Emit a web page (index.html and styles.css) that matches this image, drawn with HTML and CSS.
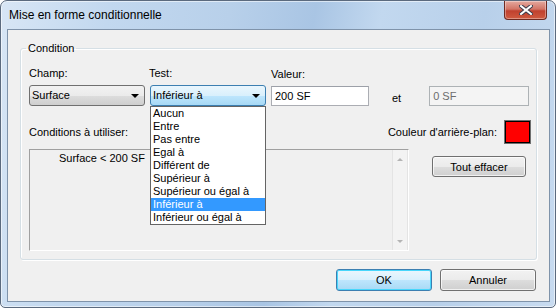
FILE: index.html
```html
<!DOCTYPE html>
<html lang="fr">
<head>
    <meta charset="UTF-8">
    <title>Mise en forme conditionnelle</title>
    <link rel="stylesheet" href="styles.css">
</head>
<body>
    <div class="window">
        <div class="titlebar">
            <span class="title">Mise en forme conditionnelle</span>
            <div class="close">
                <svg width="14" height="10" viewBox="0 0 14 10">
                    <path d="M2 1 L12 9 M12 1 L2 9" stroke="#3b3b4a" stroke-width="4" stroke-linecap="square"/>
                    <path d="M2 1 L12 9 M12 1 L2 9" stroke="#ffffff" stroke-width="2" stroke-linecap="square"/>
                </svg>
            </div>
        </div>
        <div class="client">
            <fieldset class="group">
                <legend>Condition</legend>
                <div class="fields">
                    <div class="field champ">
                        <label>Champ:</label>
                        <div class="combo">Surface<span class="arrow"></span></div>
                    </div>
                    <div class="field test">
                        <label>Test:</label>
                        <div class="combo focused">Inférieur à<span class="arrow"></span></div>
                        <ul class="droplist">
                            <li>Aucun</li>
                            <li>Entre</li>
                            <li>Pas entre</li>
                            <li>Egal à</li>
                            <li>Différent de</li>
                            <li>Supérieur à</li>
                            <li>Supérieur ou égal à</li>
                            <li class="selected">Inférieur à</li>
                            <li>Inférieur ou égal à</li>
                        </ul>
                    </div>
                    <div class="field valeur">
                        <label>Valeur:</label>
                        <div class="input">200 SF</div>
                    </div>
                    <span class="et">et</span>
                    <div class="input disabled">0 SF</div>
                </div>
                <div class="row-top">
                    <span>Conditions à utiliser:</span>
                    <div class="couleur">
                        <span>Couleur d'arrière-plan:</span>
                        <div class="swatch"></div>
                    </div>
                </div>
                <div class="row-main">
                    <div class="listbox">
                        <div class="list-items">
                            <div class="list-item">Surface &lt; 200 SF</div>
                        </div>
                        <div class="scrollbar">
                            <span class="sarrow up"></span>
                            <span class="sarrow down"></span>
                        </div>
                    </div>
                    <button class="btn clear">Tout effacer</button>
                </div>
            </fieldset>
            <div class="buttons">
                <button class="btn default">OK</button>
                <button class="btn">Annuler</button>
            </div>
        </div>
    </div>
</body>
</html>
```

FILE: styles.css
```css
body {
    margin: 0;
    font-family: 'Liberation Sans', Arial, sans-serif;
    font-size: 11px;
    color: #000;
    background: #fff;
}
.window {
    width: 556px;
    height: 308px;
    box-sizing: border-box;
    border: 1px solid #5b6a7e;
    border-radius: 7px 7px 5px 5px;
    padding: 0 5px 5px 6px;
    display: flex;
    flex-direction: column;
    background: linear-gradient(100deg, #d8e6f5 0%, #c2d8ef 18%, #b8d0ea 38%, #a9c5e4 52%, #c2d8ef 63%, #b8d0ea 80%, #c8dbf0 100%);
    box-shadow: inset 0 0 0 1px rgba(255, 255, 255, 0.55);
}
.titlebar {
    height: 28px;
    display: flex;
    justify-content: space-between;
    align-items: flex-start;
    padding-left: 2px;
}
.title {
    font-size: 12px;
    line-height: 15px;
    margin-top: 7px;
    color: #000;
}
.close {
    width: 43px;
    height: 19px;
    margin-right: 3px;
    box-sizing: border-box;
    border: 1px solid #6e2a22;
    border-top: none;
    border-radius: 0 0 4px 4px;
    background: linear-gradient(#e4a99f, #d27566 45%, #c0412f 55%, #cf5a40);
    box-shadow: inset 0 0 0 1px rgba(255, 255, 255, 0.35);
    display: flex;
    align-items: center;
    justify-content: center;
}
.client {
    flex: 1;
    border: 1px solid #7f93aa;
    background: #f0f0f0;
    display: flex;
    flex-direction: column;
}
.group {
    margin: 12px 12px 0 12px;
    padding: 12px 5px 8px 8px;
    border: 1px solid #d5dfe5;
    border-radius: 3px;
    box-shadow: inset 1px 1px 0 #fff, 1px 1px 0 #fff;
    min-width: 0;
}
.group legend {
    padding: 0 2px;
    margin-left: -3px;
    line-height: 13px;
}
.fields {
    display: flex;
    align-items: flex-end;
    gap: 5px;
}
.field {
    display: flex;
    flex-direction: column;
    gap: 5px;
    position: relative;
}
.field label {
    line-height: 13px;
}
.champ,
.test {
    width: 116px;
}
.test label {
    margin-left: -1px;
}
.valeur {
    width: 98px;
}
.combo {
    height: 21px;
    box-sizing: border-box;
    border: 1px solid #707070;
    border-radius: 3px;
    padding-left: 2px;
    line-height: 19px;
    display: flex;
    justify-content: space-between;
    align-items: center;
    background: linear-gradient(#f2f2f2, #ebebeb 50%, #dddddd 51%, #cfcfcf);
}
.combo.focused {
    border-color: #3c7fb1;
    background: linear-gradient(#eaf6fd, #d9f0fc 50%, #bee6fd 51%, #a7d9f5);
}
.arrow {
    width: 0;
    height: 0;
    margin-right: 5px;
    border-left: 4px solid transparent;
    border-right: 4px solid transparent;
    border-top: 4px solid #000;
}
.input {
    height: 20px;
    box-sizing: border-box;
    border: 1px solid #abadb3;
    border-top-color: #9ca0a8;
    background: #fff;
    padding-left: 3px;
    line-height: 18px;
}
.input.disabled {
    width: 100px;
    background: #f4f4f4;
    color: #6d6d6d;
    border-color: #adb2b5;
    margin-left: 23px;
}
.et {
    margin-left: 18px;
    line-height: 20px;
    position: relative;
    top: 2px;
}
.droplist {
    position: absolute;
    top: 39px;
    left: 0;
    width: 116px;
    box-sizing: border-box;
    margin: 0;
    padding: 0;
    list-style: none;
    background: #fff;
    border: 1px solid #646464;
    z-index: 2;
}
.droplist li {
    height: 13px;
    line-height: 13px;
    padding-left: 2px;
}
.droplist li.selected {
    background: #3399ff;
    color: #fff;
}
.row-top {
    margin-top: 14px;
    height: 24px;
    display: flex;
    justify-content: space-between;
    align-items: center;
}
.couleur {
    display: flex;
    align-items: center;
    gap: 7px;
}
.swatch {
    width: 27px;
    height: 24px;
    box-sizing: border-box;
    border: 1px solid #6f6f6f;
    box-shadow: inset 0 0 0 1px #000;
    background: #ff0000;
}
.row-main {
    margin-top: 5px;
    display: flex;
    justify-content: space-between;
    align-items: flex-start;
}
.listbox {
    width: 380px;
    height: 102px;
    box-sizing: border-box;
    border: 1px solid;
    border-color: #a0a0a0 #fff #fff #a0a0a0;
    display: flex;
}
.list-items {
    flex: 1;
    padding: 2px 0 0 29px;
}
.list-item {
    line-height: 13px;
}
.scrollbar {
    width: 16px;
    border-left: 1px solid #e4e4e4;
    border-right: 1px solid #e4e4e4;
    box-sizing: border-box;
    background: #f3f3f3;
    display: flex;
    flex-direction: column;
    justify-content: space-between;
    align-items: center;
    padding: 8px 0 7px;
}
.sarrow {
    width: 0;
    height: 0;
    border-left: 3px solid transparent;
    border-right: 3px solid transparent;
}
.sarrow.up {
    border-bottom: 3px solid #b4b4b4;
}
.sarrow.down {
    border-top: 3px solid #b4b4b4;
}
.btn {
    font-family: inherit;
    font-size: 11px;
    color: #000;
    height: 21px;
    padding: 0;
    box-sizing: border-box;
    border: 1px solid #707070;
    border-radius: 3px;
    background: linear-gradient(#f2f2f2, #ebebeb 50%, #dddddd 51%, #cfcfcf);
    box-shadow: inset 0 0 0 1px rgba(255, 255, 255, 0.7);
}
.btn.clear {
    width: 94px;
    margin-top: 7px;
    margin-right: 5px;
}
.buttons {
    display: flex;
    justify-content: flex-end;
    gap: 8px;
    margin: 9px 13px 0 0;
}
.buttons .btn {
    width: 96px;
    height: 22px;
}
.btn.default {
    border-color: #3c7fb1;
    background: linear-gradient(#eaf6fd, #d9f0fc 50%, #bee6fd 51%, #a7d9f5);
    box-shadow: inset 0 0 0 1px #48d6fb;
}
```
